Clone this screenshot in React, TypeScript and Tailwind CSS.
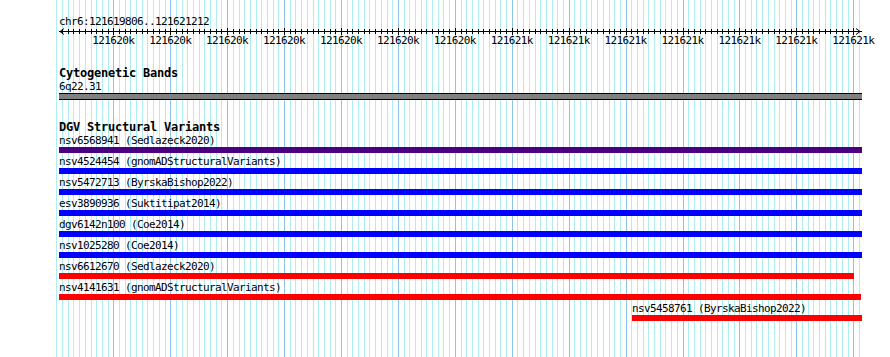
const TRACK_LEFT = 59;
const TRACK_WIDTH = 803;
const MINOR_START = 56.38;
const MINOR_STEP = 5.692;

const gridLines = Array.from({ length: 142 }, (_, i) => ({
  x: Math.round(MINOR_START + MINOR_STEP * i) + 0.5,
  major: i % 10 === 0 && i >= 10,
}));

const rulerLabels = Array.from({ length: 14 }, (_, k) => ({
  x: MINOR_START + MINOR_STEP * 10 * (k + 1),
  label: k < 7 ? "121620k" : "121621k",
}));

const variants = [
  { name: "nsv6568941 (Sedlazeck2020)", color: "bg-[#4b0082]", start: 0, end: 803 },
  { name: "nsv4524454 (gnomADStructuralVariants)", color: "bg-[#0000ff]", start: 0, end: 803 },
  { name: "nsv5472713 (ByrskaBishop2022)", color: "bg-[#0000ff]", start: 0, end: 803 },
  { name: "esv3890936 (Suktitipat2014)", color: "bg-[#0000ff]", start: 0, end: 803 },
  { name: "dgv6142n100 (Coe2014)", color: "bg-[#0000ff]", start: 0, end: 803 },
  { name: "nsv1025280 (Coe2014)", color: "bg-[#0000ff]", start: 0, end: 803 },
  { name: "nsv6612670 (Sedlazeck2020)", color: "bg-[#ff0000]", start: 0, end: 795 },
  { name: "nsv4141631 (gnomADStructuralVariants)", color: "bg-[#ff0000]", start: 0, end: 802 },
  { name: "nsv5458761 (ByrskaBishop2022)", color: "bg-[#ff0000]", start: 573, end: 803 },
];

const label = "h-[13px] text-[11px] leading-[13px] tracking-[-0.62px] whitespace-nowrap";
const title = "h-[13px] text-[12px] leading-[13px] tracking-[-0.22px] font-bold whitespace-nowrap";

function Grid() {
  return (
    <svg className="absolute inset-0" width={890} height={357}>
      {gridLines.map((l, i) => (
        <line
          key={i}
          x1={l.x}
          x2={l.x}
          y1={0}
          y2={357}
          stroke={l.major ? "#8cc4ea" : "#aeeef2"}
          strokeWidth={1}
        />
      ))}
    </svg>
  );
}

function Ruler() {
  return (
    <div className="relative h-[20px]" style={{ width: TRACK_WIDTH }}>
      <svg className="absolute left-0 top-0" width={TRACK_WIDTH} height={8}>
        <line x1={0} x2={TRACK_WIDTH} y1={3.5} y2={3.5} stroke="#000" />
        <polyline points="5,0.5 1,3.5 5,6.5" fill="none" stroke="#000" />
        <polyline points={`${TRACK_WIDTH - 6},0.5 ${TRACK_WIDTH - 2},3.5 ${TRACK_WIDTH - 6},6.5`} fill="none" stroke="#000" />
        {gridLines.slice(1, -1).map((l, i) => {
          const x = l.x - TRACK_LEFT;
          return (
            <line
              key={i}
              x1={x}
              x2={x}
              y1={l.major ? 0 : 1}
              y2={l.major ? 7 : 6}
              stroke="#000"
            />
          );
        })}
      </svg>
      {rulerLabels.map((r, i) => (
        <span
          key={i}
          className={`absolute top-[6px] -translate-x-1/2 ${label}`}
          style={{ left: r.x - TRACK_LEFT }}
        >
          {r.label}
        </span>
      ))}
    </div>
  );
}

export default function App() {
  return (
    <div className="relative w-[890px] h-[357px] overflow-hidden bg-white font-['DejaVu_Sans_Mono',monospace] text-black">
      <Grid />
      <div className="relative flex flex-col pl-[59px] pt-[15px]">
        <div className={label}>chr6:121619806..121621212</div>
        <Ruler />

        <div className={`mt-[19px] ${title}`}>Cytogenetic Bands</div>
        <div className={label}>6q22.31</div>
        <div className="h-[7px] w-[803px] border-y border-black bg-[#808080]" />

        <div className={`mt-[21px] ${title}`}>DGV Structural Variants</div>
        {variants.map((v, i) => (
          <div key={v.name} className={i === 0 ? "flex flex-col" : "mt-[2px] flex flex-col"}>
            <div className={label} style={{ marginLeft: v.start }}>
              {v.name}
            </div>
            <div
              className={`h-[6px] ${v.color}`}
              style={{ marginLeft: v.start, width: v.end - v.start }}
            />
          </div>
        ))}
      </div>
    </div>
  );
}
